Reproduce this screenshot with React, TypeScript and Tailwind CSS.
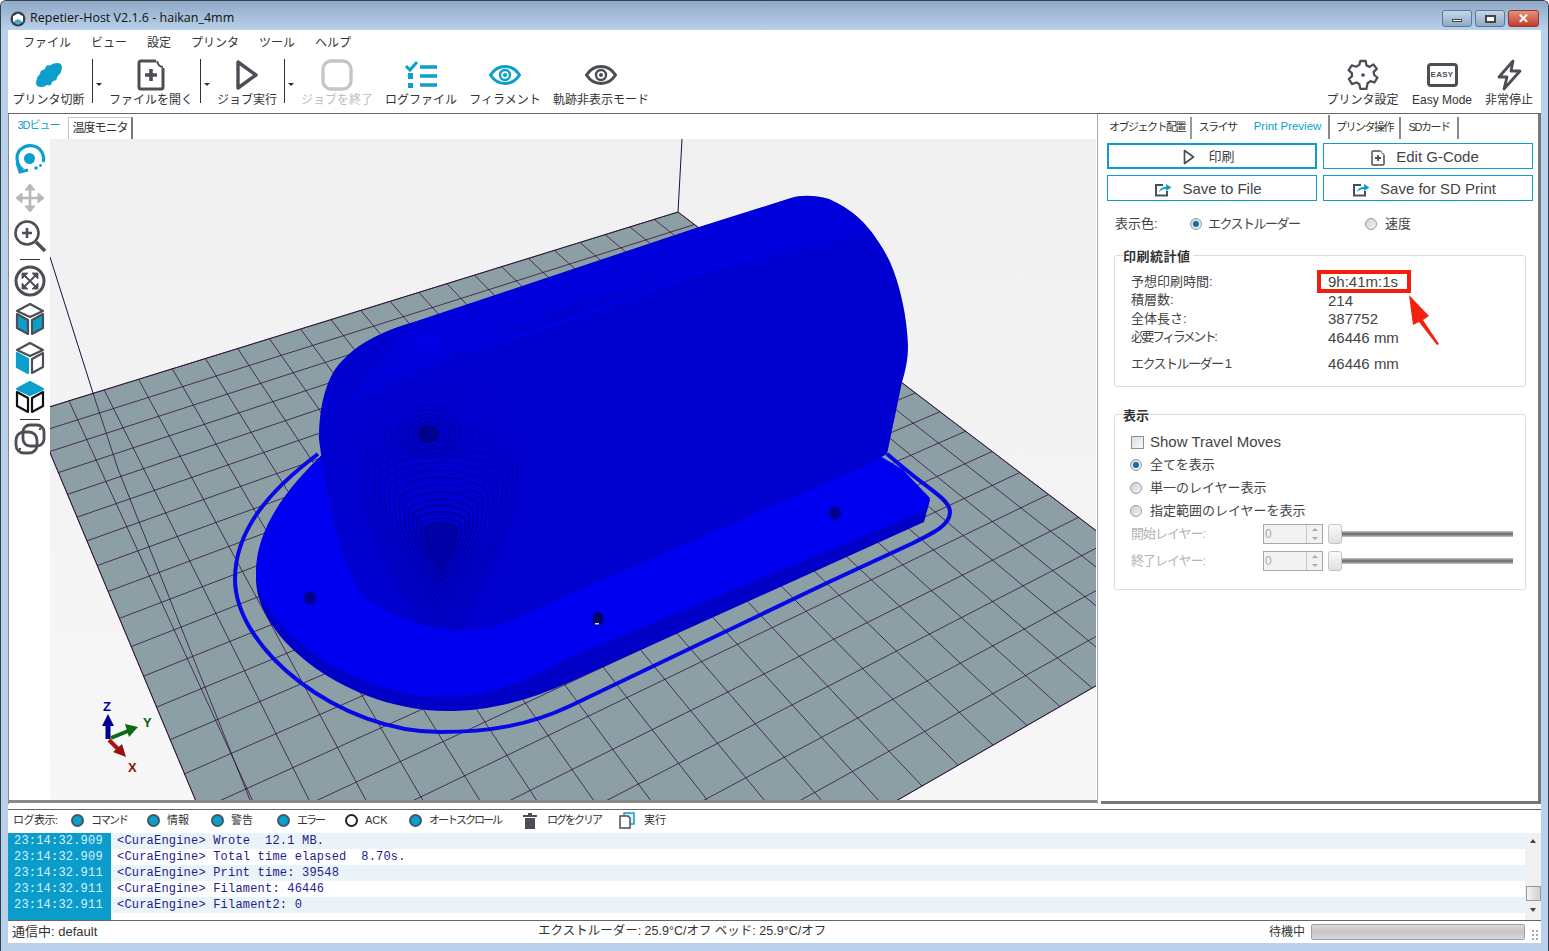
import React from 'react';

const TEAL = '#0c9fcd';
const DARK = '#4c4e56';

// bed corners in page pixels, grid is drawn through a homography
const corners = [[33, 412], [678, 212], [1212, 619], [332, 1126]];
const project = (u: number, v: number) => {
  const [[x0, y0], [x1, y1], [x2, y2], [x3, y3]] = corners;
  const dx1 = x1 - x2, dx2 = x3 - x2, sx = x0 - x1 + x2 - x3;
  const dy1 = y1 - y2, dy2 = y3 - y2, sy = y0 - y1 + y2 - y3;
  const den = dx1 * dy2 - dx2 * dy1;
  const g = (sx * dy2 - dx2 * sy) / den;
  const h = (dx1 * sy - sx * dy1) / den;
  const a = x1 - x0 + g * x1, b = x3 - x0 + h * x3;
  const d = y1 - y0 + g * y1, e = y3 - y0 + h * y3;
  const w = g * u + h * v + 1;
  return [(a * u + b * v + x0) / w, (d * u + e * v + y0) / w];
};
const DIV = 22;
const gridLines: number[][] = [];
for (let i = 0; i <= DIV; i++) {
  gridLines.push([...project(i / DIV, 0), ...project(i / DIV, 1)]);
  gridLines.push([...project(0, i / DIV), ...project(1, i / DIV)]);
}

const bodyPath =
  'M319 439 C319 410 325 375 345 358 C360 342 385 330 417 321 L570 270 L699 227 L791 198 C800 195 815 195 829 199 C845 206 855 214 863 222 C880 240 890 262 890 262 C900 285 907 316 908 346 C908 360 905 372 902 382 L887 454 L859 469 L570 594 C530 612 505 629 470 630 C430 630 395 620 370 600 C345 585 335 530 323 469 Z';
const shield = 'M-16 -18 C-8 -24 8 -24 16 -18 C18 -5 8 12 0 24 C-8 12 -18 -5 -16 -18 Z';

function Scene() {
  const rings = [1.25, 1.5, 1.75, 2, 2.3, 2.6, 2.9, 3.2, 3.5, 3.8, 4.1, 4.4, 4.7, 5];
  const upper = [10, 15, 20, 25, 30, 36, 42, 48, 55, 62, 70, 78];
  return (
    <svg width="1046" height="661" viewBox="50 139 1046 661" className="block">
      <defs>
        <linearGradient id="sky" x1="0" y1="0" x2="0" y2="1">
          <stop offset="0" stopColor="#f0f0f0" />
          <stop offset="1" stopColor="#f7f7f7" />
        </linearGradient>
        <pattern id="hatch" width="3" height="2" patternUnits="userSpaceOnUse" patternTransform="rotate(-18)">
          <rect width="3" height="1" fill="#0000c4" />
        </pattern>
        <clipPath id="bodyClip">
          <path d={bodyPath} />
        </clipPath>
      </defs>
      <rect x="50" y="139" width="1046" height="661" fill="url(#sky)" />
      <path d="M50 257 L93 393" stroke="#2c0a3c" fill="none" />
      <path d="M682 139 L678 212" stroke="#2c0a3c" fill="none" />
      <polygon points="33,412 678,212 1212,619 332,1126" fill="#8c9fa5" stroke="#22102e" strokeWidth="0.8" />
      {gridLines.map((l, i) => (
        <line key={i} x1={l[0]} y1={l[1]} x2={l[2]} y2={l[3]} stroke="#2c0a3c" strokeWidth="0.75" />
      ))}
      <path d="M93 393 L118 469 L250 800" stroke="#2c0a3c" strokeWidth="0.75" fill="none" />

      {/* skirt */}
      <path
        d="M318 454 C270 490 235 530 235 579 C235 650 340 732 440 732 C490 732 530 725 570 706 L829 582 L911 544 C935 532 950 525 950 512 C950 500 930 490 905 469 L887 454"
        fill="none"
        stroke="#0808e4"
        strokeWidth="4"
      />
      {/* base side and top */}
      <path d="M322 455 C285 490 256 530 256 579 C256 640 350 711 447 711 C490 711 530 700 570 682 L924 522 L930 500 L902 469 Z" fill="#0000c6" />
      <path d="M322 455 C285 490 256 530 256 572 C256 625 350 697 447 697 C490 697 530 680 570 657 L924 511 L930 498 L902 469 L880 456 Z" fill="#0000f0" />
      {/* holes */}
      <ellipse cx="310" cy="598" rx="6" ry="6.5" fill="#00008a" />
      <ellipse cx="598" cy="619" rx="5.5" ry="7" fill="#00006a" />
      <ellipse cx="835" cy="512" rx="6" ry="7" fill="#000090" transform="translate(0 1)" />
      <rect x="595" y="623" width="4" height="1.5" fill="#d8d8f0" />
      {/* body */}
      <path d={bodyPath} fill="#0000d6" />
      <g clipPath="url(#bodyClip)">
        <path d={bodyPath} fill="url(#hatch)" opacity="0.55" />
        <path d="M417 321 L791 198 L829 199 L870 232 L570 305 L350 400 Z" fill="#0000e0" opacity="0.7" />
        <path d="M467 352 L570 319 L842 222" stroke="#0000f2" strokeWidth="1.6" fill="none" />
        <ellipse cx="428" cy="342" rx="16" ry="8" fill="#0000e4" />
        {upper.map((r, i) => (
          <ellipse key={i} cx="429" cy="434" rx={r * 1.05} ry={r * 0.8} fill="none" stroke="#0000a0" strokeWidth={i < 5 ? 1.4 : 0.8} opacity={1 - i * 0.07} />
        ))}
        <ellipse cx="428" cy="434" rx="11" ry="9" fill="#000090" />
        {rings.map((k, i) => (
          <g key={i}>
            {i < 9 && (
              <path
                d={shield}
                transform={`translate(441 ${546 - i * 0.6}) scale(${k + 0.07})`}
                fill="none"
                stroke="#0000ea"
                strokeWidth="1"
                vectorEffect="non-scaling-stroke"
              />
            )}
            <path
              d={shield}
              transform={`translate(441 ${546 - i * 0.6}) scale(${k})`}
              fill="none"
              stroke="#000094"
              strokeWidth="1.6"
              vectorEffect="non-scaling-stroke"
              opacity={1 - i * 0.05}
            />
          </g>
        ))}
        <path d={shield} transform="translate(441 546)" fill="#0000a8" stroke="#000088" strokeWidth="1.5" />
      </g>

      {/* axes */}
      <path d="M108 739 L108 722" stroke="#000094" strokeWidth="5" />
      <polygon points="108,714 114,726 102,726" fill="#000094" />
      <path d="M111 738 L128 731" stroke="#0b6a12" strokeWidth="4" />
      <polygon points="138,727 125,724 129,737" fill="#0b6a12" />
      <path d="M109 740 L120 751" stroke="#b01212" strokeWidth="4" />
      <polygon points="126,757 113,752 122,744" fill="#951010" />
      <text x="103" y="711" fontSize="13" fontWeight="700" fill="#0000a0" fontFamily="Liberation Sans">Z</text>
      <text x="143" y="727" fontSize="13" fontWeight="700" fill="#0b5a12" fontFamily="Liberation Sans">Y</text>
      <text x="128" y="772" fontSize="13" fontWeight="700" fill="#8c1010" fontFamily="Liberation Sans">X</text>
    </svg>
  );
}

function Radio({ on = false, className = '' }: { on?: boolean; className?: string }) {
  return (
    <span className={`flex h-[12px] w-[12px] shrink-0 items-center justify-center rounded-full border border-[#9a9a9a] bg-gradient-to-br from-[#d0d0d0] to-[#f4f4f4] ${className}`}>
      {on && <span className="h-[6px] w-[6px] rounded-full bg-[#0d6fb0]" />}
    </span>
  );
}

function LogOption({ label, off = false, w, kana = true }: { label: string; off?: boolean; w: string; kana?: boolean }) {
  return (
    <span className={`flex items-center ${w}`}>
      <span className={`h-[13px] w-[13px] shrink-0 rounded-full border-2 ${off ? 'border-[#222] bg-white' : 'border-[#3c5a68] bg-[#0c9fcd]'}`} />
      <span className={`ml-[7px] whitespace-nowrap text-[11px] text-[#333] ${kana ? 'tracking-[-2px]' : 'tracking-[0px]'}`}>{label}</span>
    </span>
  );
}

function Tool({ w, label, className = '', muted = false, children }: { w: string; label: string; className?: string; muted?: boolean; children: React.ReactNode }) {
  return (
    <div className={`flex shrink-0 flex-col items-center ${w} ${className}`}>
      <div className="flex h-[36px] items-center justify-center">{children}</div>
      <span className={`whitespace-nowrap text-[12px] leading-[14px] ${muted ? 'text-[#bdbdbd]' : 'text-[#333]'}`}>{label}</span>
    </div>
  );
}

function Drop({ className = '' }: { className?: string }) {
  return (
    <div className={`flex h-[44px] shrink-0 items-start ${className}`}>
      <div className="mt-[2px] h-[44px] w-px bg-[#333]" />
      <div className="mt-[26px] ml-[3px] h-0 w-0 border-x-[3px] border-t-[3px] border-x-transparent border-t-[#333]" />
    </div>
  );
}

const PlayIcon = ({ s = 1 }: { s?: number }) => (
  <svg width={24 * s} height={32 * s} viewBox="0 0 24 32" fill="none" stroke={DARK} strokeWidth="3.4" strokeLinejoin="round">
    <path d="M3 3 L21 16 L3 29 Z" />
  </svg>
);

const FileIcon = ({ s = 1 }: { s?: number }) => (
  <svg width={28 * s} height={32 * s} viewBox="0 0 28 32" fill="none" stroke={DARK} strokeWidth="3" strokeLinejoin="round">
    <path d="M19 2 H4 A2 2 0 0 0 2 4 V28 A2 2 0 0 0 4 30 H24 A2 2 0 0 0 26 28 V9" />
    <path d="M20 2 C21 6 23 8 26 8" strokeWidth="2" />
    <path d="M14 10 V22 M8 16 H20" strokeWidth="3.6" />
  </svg>
);

const EyeIcon = ({ color }: { color: string }) => (
  <svg width="32" height="20" viewBox="0 0 32 20" fill="none" stroke={color}>
    <path d="M1.5 10 C6 3 11 1.5 16 1.5 C21 1.5 26 3 30.5 10 C26 17 21 18.5 16 18.5 C11 18.5 6 17 1.5 10 Z" strokeWidth="3" />
    <circle cx="16" cy="10" r="5" strokeWidth="2.4" />
    <circle cx="16" cy="10" r="2" fill={color} stroke="none" />
  </svg>
);

const ShareIcon = () => (
  <svg width="18" height="15" viewBox="0 0 18 15" fill="none">
    <path d="M9 3 H2 V13.5 H13 V9" stroke={DARK} strokeWidth="2" />
    <path d="M5 10 C6 6 9 5 12 5 V2 L17.5 5.5 L12 9 V7 C9 7 7 8 5 10 Z" fill={TEAL} />
  </svg>
);

const CubeIcon = ({ mode }: { mode: 'sides' | 'left' | 'top' }) => {
  const line = mode === 'top' ? '#111' : DARK;
  return (
    <svg width="30" height="34" viewBox="0 0 30 34" strokeWidth="2.2" strokeLinejoin="round" stroke={line}>
      <path d="M15 2 L28 9 L15 15 L2 9 Z" fill={mode === 'top' ? TEAL : 'white'} stroke={mode === 'top' ? TEAL : line} />
      <path d="M2 12 L13 18 V32 L2 26 Z" fill={mode === 'top' ? 'white' : TEAL} stroke={mode === 'top' ? line : mode === 'left' ? TEAL : line} />
      <path d="M28 12 L17 18 V32 L28 26 Z" fill={mode === 'sides' ? TEAL : 'white'} />
    </svg>
  );
};

const Stat = ({ label, value, className = '', labelClass = '' }: { label: string; value: string; className?: string; labelClass?: string }) => (
  <div className={`flex h-[18.5px] items-center ${className}`}>
    <span className={`w-[197px] -translate-y-px whitespace-nowrap text-[13px] text-[#444] ${labelClass}`}>{label}</span>
    <span className="text-[15px] text-[#444]">{value}</span>
  </div>
);

const ViewOption = ({ label, on = false }: { label: string; on?: boolean }) => (
  <div className="flex h-[23px] items-center">
    <Radio on={on} className="ml-[15px]" />
    <span className="ml-[8px] whitespace-nowrap text-[13px] text-[#444]">{label}</span>
  </div>
);

const LayerRow = ({ label, className = '' }: { label: string; className?: string }) => (
  <div className={`flex h-[20px] items-center ${className}`}>
    <span className="ml-[16px] w-[132px] whitespace-nowrap text-[13px] tracking-[-1px] text-[#b4b4b4]">{label}</span>
    <div className="flex h-[20px] w-[60px] items-center justify-between border border-[#a8a8a8] bg-[#f2f2f2] pl-[1px] text-[12px] text-[#aaa]">
      <span>0</span>
      <span className="flex h-full w-[16px] flex-col items-center justify-around border-l border-[#c8c8c8]">
        <span className="h-0 w-0 border-x-[3px] border-b-[3px] border-x-transparent border-b-[#aaa]" />
        <span className="h-0 w-0 border-x-[3px] border-t-[3px] border-x-transparent border-t-[#aaa]" />
      </span>
    </div>
    <div className="relative ml-[5px] h-[20px] w-[185px]">
      <div className="absolute top-[7px] left-[10px] right-0 h-[6px] bg-gradient-to-b from-[#c8c8c8] via-[#666] to-[#c8c8c8]" />
      <div className="absolute top-0 left-0 h-[20px] w-[14px] rounded-[3px] border border-[#c4c4c4] bg-gradient-to-b from-[#fafafa] to-[#e0e0e0]" />
    </div>
  </div>
);

const logRows = [
  ['23:14:32.909', '<CuraEngine> Wrote  12.1 MB.'],
  ['23:14:32.909', '<CuraEngine> Total time elapsed  8.70s.'],
  ['23:14:32.911', '<CuraEngine> Print time: 39548'],
  ['23:14:32.911', '<CuraEngine> Filament: 46446'],
  ['23:14:32.911', '<CuraEngine> Filament2: 0'],
];

export default function App() {
  return (
    <div className="flex h-[951px] w-[1549px] flex-col overflow-hidden rounded-t-[6px] border border-b-0 border-[#33404c] bg-[#b9d1ea] font-['Liberation_Sans','Noto_Sans_CJK_JP',sans-serif] text-[#333]">
      {/* title bar */}
      <div className="flex h-[29px] shrink-0 items-center bg-gradient-to-b from-[#8fa9c6] to-[#b9d1ea] pt-[6px] pl-[9px]">
        <svg width="16" height="16" viewBox="0 0 16 16">
          <circle cx="8" cy="8" r="7.5" fill="#3a4048" />
          <path d="M8 2.5 L13 5.3 V10.7 L8 13.5 L3 10.7 V5.3 Z" fill="#fff" />
          <path d="M8 8 L13 10.7 L8 13.5 L3 10.7 Z" fill="#4aa7cf" />
        </svg>
        <span className="ml-[4px] font-['Open_Sans',sans-serif] text-[12.5px] text-[#111]">Repetier-Host V2.1.6 - haikan_4mm</span>
        <div className="ml-auto mr-[9px] flex gap-[3px]">
          <div className="flex h-[17px] w-[30px] items-end justify-center rounded-[3px] border border-[#5f7893] bg-gradient-to-b from-[#c5d6e8] to-[#8ea9c6] pb-[4px]">
            <div className="h-[3px] w-[10px] border border-[#444] bg-white" />
          </div>
          <div className="flex h-[17px] w-[30px] items-center justify-center rounded-[3px] border border-[#5f7893] bg-gradient-to-b from-[#c5d6e8] to-[#8ea9c6]">
            <div className="h-[8px] w-[11px] border-2 border-[#444] bg-white" />
          </div>
          <div className="flex h-[17px] w-[31px] items-center justify-center rounded-[3px] border border-[#8c3a32] bg-gradient-to-b from-[#e2917f] to-[#c4382a] text-[13px] leading-none font-bold text-white">
            ✕
          </div>
        </div>
      </div>

      {/* client area */}
      <div className="mx-[7px] flex h-[913px] shrink-0 flex-col bg-white">
        {/* menu */}
        <div className="flex h-[25px] shrink-0 items-center gap-[20px] pl-[15px] text-[12px] text-[#333]">
          <span>ファイル</span>
          <span>ビュー</span>
          <span>設定</span>
          <span>プリンタ</span>
          <span>ツール</span>
          <span>ヘルプ</span>
        </div>

        {/* toolbar */}
        <div className="flex h-[59px] shrink-0 items-start border-b border-[#666] pl-[4px] pt-[2px]">
          <Tool w="w-[73px]" label="プリンタ切断">
            <svg width="32" height="30" viewBox="0 0 32 30">
              <g fill={TEAL} transform="rotate(-42 16 15)">
                <ellipse cx="16" cy="15" rx="16" ry="7.5" />
                <circle cx="7" cy="11" r="2.5" />
                <circle cx="13" cy="9" r="2.5" />
                <circle cx="20" cy="9" r="2.5" />
                <circle cx="11" cy="21" r="2.5" />
                <circle cx="18" cy="21" r="2.5" />
                <circle cx="25" cy="19" r="2.5" />
              </g>
            </svg>
          </Tool>
          <Drop className="ml-[7px]" />
          <Tool w="w-[82px]" label="ファイルを開く" className="ml-[8px]">
            <FileIcon />
          </Tool>
          <Drop className="ml-[8px]" />
          <Tool w="w-[60px]" label="ジョブ実行" className="ml-[7px]">
            <PlayIcon />
          </Tool>
          <Drop className="ml-[7px]" />
          <Tool w="w-[72px]" label="ジョブを終了" className="ml-[7px]" muted>
            <svg width="32" height="32" viewBox="0 0 32 32" fill="none" stroke="#c6c6c6" strokeWidth="3.4">
              <rect x="2" y="2" width="28" height="28" rx="8" />
            </svg>
          </Tool>
          <Tool w="w-[72px]" label="ログファイル" className="ml-[12px]">
            <svg width="34" height="30" viewBox="0 0 34 30" fill="none" stroke={TEAL}>
              <path d="M2 6 L6 10 L13 2" strokeWidth="3" />
              <path d="M16 7 H33 M16 16 H33 M16 25 H33" strokeWidth="3.6" />
              <path d="M4 13 H9 V19 H4 Z M4 23 H9 V28 H4 Z" fill={TEAL} strokeWidth="0" />
            </svg>
          </Tool>
          <Tool w="w-[72px]" label="フィラメント" className="ml-[12px]">
            <EyeIcon color={TEAL} />
          </Tool>
          <Tool w="w-[96px]" label="軌跡非表示モード" className="ml-[12px]">
            <EyeIcon color={DARK} />
          </Tool>
          <Tool w="w-[73px]" label="プリンタ設定" className="ml-auto">
            <svg width="32" height="32" viewBox="0 0 24 24" fill="none" stroke={DARK} strokeWidth="1.7" strokeLinejoin="round">
              <path d="M10 1.5 H14 L14.6 4.8 L17 5.9 L19.8 4 L22.4 7.4 L20 9.6 L20.4 12 L22.8 14 L20.6 17.6 L17.6 16.6 L15.4 18.2 L14.6 22.4 H10 L9.2 18.8 L7 17.6 L3.8 18.8 L1.4 15 L3.8 12.8 L3.6 10.6 L1.2 8.4 L3.6 4.8 L6.8 5.8 L9.2 4.4 Z" />
              <circle cx="12" cy="12" r="1.4" fill={DARK} stroke="none" />
            </svg>
          </Tool>
          <Tool w="w-[62px]" label="Easy Mode" className="ml-[12px]">
            <div className="flex h-[24px] w-[31px] items-center justify-center rounded-[4px] border-[3px] border-[#4c4e56] text-[8px] font-bold tracking-[0.3px] text-[#4c4e56]">
              EASY
            </div>
          </Tool>
          <Tool w="w-[48px]" label="非常停止" className="ml-[12px] mr-[8px]">
            <svg width="26" height="32" viewBox="0 0 26 32" fill="none" stroke={DARK} strokeWidth="2.8" strokeLinejoin="round">
              <path d="M17 2 L3 18 H11 L8 30 L24 12 H15 Z" />
            </svg>
          </Tool>
        </div>

        {/* main panes */}
        <div className="flex h-[690px] shrink-0">
          <div className="flex w-[1089px] shrink-0 flex-col border-l border-[#888]">
            <div className="flex h-[25px] shrink-0 items-end">
              <div className="flex h-[25px] w-[59px] items-start justify-center pt-[3px] text-[11px] tracking-[-1px] text-[#0c9fcd]">3Dビュー</div>
              <div className="flex h-[22px] w-[65px] items-center justify-center border-t border-l border-[#c4c4c4] border-r-2 border-r-[#777] pb-[2px] text-[12px] tracking-[-1px] text-[#333]">温度モニタ</div>
            </div>
            <div className="flex h-[661px] shrink-0">
              <div className="flex w-[41px] shrink-0 flex-col items-center bg-white pt-[4px]">
                <svg width="32" height="32" viewBox="0 0 32 32" fill="none">
                  <path d="M9 27 C2 22 1 11 7 6 C14 0 26 2 29 12 C30 15 30 17 29 19" stroke={TEAL} strokeWidth="3.2" />
                  <path d="M3 20 L6 29 L14 27" stroke={TEAL} strokeWidth="3" />
                  <circle cx="15.5" cy="15.5" r="5.5" fill={TEAL} />
                  <circle cx="22" cy="25" r="1.8" fill={TEAL} />
                  <circle cx="26.5" cy="22.5" r="1.4" fill={TEAL} />
                </svg>
                <svg width="32" height="32" viewBox="0 0 32 32" className="mt-[7px]" fill="none" stroke="#b8b8b8" strokeWidth="2.6">
                  <path d="M16 3 V29 M3 16 H29" />
                  <path d="M11 8 L16 2 L21 8 Z M11 24 L16 30 L21 24 Z M8 11 L2 16 L8 21 Z M24 11 L30 16 L24 21 Z" fill="#b8b8b8" strokeWidth="1" />
                </svg>
                <svg width="34" height="34" viewBox="0 0 34 34" className="mt-[5px]" fill="none" stroke={DARK}>
                  <circle cx="14" cy="14" r="11.5" strokeWidth="2.6" />
                  <path d="M14 9 V19 M9 14 H19" strokeWidth="2.6" />
                  <path d="M23 23 L32 32" strokeWidth="3.6" />
                </svg>
                <div className="mt-[6px] h-px w-[20px] bg-[#333]" />
                <svg width="32" height="32" viewBox="0 0 32 32" className="mt-[5px]" fill="none" stroke={DARK}>
                  <circle cx="16" cy="16" r="14" strokeWidth="3" />
                  <path d="M9 9 L23 23 M23 9 L9 23" strokeWidth="1.8" />
                  <path d="M8 14 V8 H14 Z M24 14 V8 H18 Z M8 18 V24 H14 Z M24 18 V24 H18 Z" fill={DARK} strokeWidth="0.8" />
                </svg>
                <div className="mt-[5px]"><CubeIcon mode="sides" /></div>
                <div className="mt-[5px]"><CubeIcon mode="left" /></div>
                <div className="mt-[5px]"><CubeIcon mode="top" /></div>
                <div className="mt-[5px] h-px w-[20px] bg-[#333]" />
                <svg width="32" height="32" viewBox="0 0 32 32" className="mt-[3px]" fill="none" stroke={DARK} strokeWidth="2.8">
                  <rect x="9" y="2" width="21" height="21" rx="7" />
                  <rect x="2" y="9" width="21" height="21" rx="8" />
                  <circle cx="26" cy="6" r="1.2" fill={DARK} strokeWidth="0" />
                  <circle cx="6" cy="26" r="1.2" fill={DARK} strokeWidth="0" />
                </svg>
              </div>
              <Scene />
            </div>
            <div className="h-[3px] shrink-0 bg-[#8a8a8a]" />
          </div>
          <div className="w-[4px] shrink-0 border-l border-[#aaa]" />

          {/* right pane */}
          <div className="flex w-[440px] shrink-0 flex-col border-r-[3px] border-b-[3px] border-[#777]">
            <div className="flex h-[25px] shrink-0 items-end pl-[3px] text-[11px] tracking-[-1.5px] text-[#333]">
              <div className="flex h-[22px] w-[88px] items-center justify-center border-r-2 border-[#999] pb-[2px]">オブジェクト配置</div>
              <div className="flex h-[22px] w-[51px] items-center justify-center pb-[2px]">スライサ</div>
              <div className="flex h-[24px] w-[87px] items-start justify-center border-r-2 border-[#888] pt-[3px] pl-[4px] text-[11.5px] tracking-[0px] text-[#0c9fcd]">Print Preview</div>
              <div className="flex h-[22px] w-[71px] items-center justify-center border-r-2 border-[#888] pb-[2px]">プリンタ操作</div>
              <div className="flex h-[22px] w-[58px] items-center justify-center border-r-2 border-[#888] pb-[2px]">SDカード</div>
            </div>
            <div className="grid grid-cols-2 gap-x-[6px] gap-y-[6px] pt-[4px] pl-[6px] pr-[5px] text-[15px] text-[#444]">
              <button className="flex h-[26px] items-center justify-center gap-[13px] border-[2px] border-[#0c9fcd] pt-[2px] pr-[6px]">
                <PlayIcon s={0.5} />
                <span className="text-[13px]">印刷</span>
              </button>
              <button className="flex h-[26px] items-center justify-center gap-[11px] border border-[#0c9fcd] pt-[3px] pr-[6px]">
                <FileIcon s={0.5} />
                <span>Edit G-Code</span>
              </button>
              <button className="flex h-[26px] items-center justify-center gap-[10px] border border-[#0c9fcd] pt-[3px] pr-[8px]">
                <ShareIcon />
                <span>Save to File</span>
              </button>
              <button className="flex h-[26px] items-center justify-center gap-[10px] border border-[#0c9fcd] pt-[3px] pr-[8px]">
                <ShareIcon />
                <span>Save for SD Print</span>
              </button>
            </div>

            <div className="mt-[12px] flex h-[22px] items-center pl-[14px] text-[13px] text-[#444]">
              <span className="w-[75px]">表示色:</span>
              <Radio on />
              <span className="ml-[6px] w-[157px] tracking-[-1.5px]">エクストルーダー</span>
              <Radio />
              <span className="ml-[8px]">速度</span>
            </div>

            {/* stats box */}
            <div className="relative mt-[20px] ml-[13px] h-[132px] w-[412px] rounded-[3px] border border-[#dcdcdc]">
              <span className="absolute top-[-7px] left-[8px] bg-white pr-[2px] text-[13px] leading-[16px] font-bold tracking-[0.5px] text-[#333]">印刷統計値</span>
              <div className="pt-[17px] pl-[16px]">
                <Stat label="予想印刷時間:" value="9h:41m:1s" />
                <Stat label="積層数:" value="214" />
                <Stat label="全体長さ:" value="387752" />
                <Stat label="必要フィラメント:" value="46446 mm" labelClass="tracking-[-2.5px]" />
                <Stat label="エクストルーダー 1" value="46446 mm" className="mt-[8px]" labelClass="tracking-[-1.5px]" />
              </div>
              <div className="absolute top-[14px] left-[202px] h-[23px] w-[94px] border-[4px] border-[#f21d0c]" />
              <svg width="40" height="60" viewBox="0 0 40 60" className="absolute top-[36px] left-[286px]">
                <path d="M8 3 L28 24 L22 28 L38 52 L36 53 L18 30 L12 33 Z" fill="#f4200e" />
              </svg>
            </div>

            {/* view box */}
            <div className="relative mt-[27px] ml-[13px] h-[176px] w-[412px] rounded-[3px] border border-[#dcdcdc]">
              <span className="absolute top-[-7px] left-[8px] bg-white pr-[2px] text-[13px] leading-[16px] font-bold text-[#333]">表示</span>
              <div className="pt-[16px]">
                <div className="flex h-[22px] items-center">
                  <span className="ml-[16px] h-[13px] w-[13px] border border-[#8e8e8e] bg-gradient-to-br from-[#dedede] to-[#f8f8f8]" />
                  <span className="ml-[6px] text-[15px] text-[#444]">Show Travel Moves</span>
                </div>
                <ViewOption label="全てを表示" on />
                <ViewOption label="単一のレイヤー表示" />
                <ViewOption label="指定範囲のレイヤーを表示" />
                <LayerRow label="開始レイヤー:" className="mt-[2px]" />
                <LayerRow label="終了レイヤー:" className="mt-[7px]" />
              </div>
            </div>
          </div>
        </div>

        <div className="h-[5px] shrink-0" />

        {/* log */}
        <div className="flex h-[112px] shrink-0 flex-col border-y border-[#666]">
          <div className="flex h-[23px] shrink-0 items-center pb-[2px] pl-[5px]">
            <span className="w-[58px] whitespace-nowrap text-[11px] tracking-[-0.5px] text-[#333]">ログ表示:</span>
            <LogOption label="コマンド" w="w-[76px]" />
            <LogOption label="情報" kana={false} w="w-[64px]" />
            <LogOption label="警告" kana={false} w="w-[66px]" />
            <LogOption label="エラー" w="w-[68px]" />
            <LogOption label="ACK" off kana={false} w="w-[64px]" />
            <LogOption label="オートスクロール" w="w-[114px]" />
            <svg width="14" height="16" viewBox="0 0 14 16" fill={DARK}>
              <rect x="0" y="2" width="14" height="2" />
              <rect x="5" y="0" width="4" height="2" />
              <rect x="2" y="5" width="10" height="11" />
            </svg>
            <span className="ml-[10px] w-[72px] whitespace-nowrap text-[11px] tracking-[-2px]">ログをクリア</span>
            <svg width="16" height="17" viewBox="0 0 16 17" fill="white" stroke={DARK} strokeWidth="1.5">
              <path d="M5 1 H15 V12 H5 Z" fill="#dff1f8" stroke={TEAL} />
              <path d="M1 4 H9 L11 6 V16 H1 Z" />
            </svg>
            <span className="ml-[9px] text-[11px]">実行</span>
          </div>
          <div className="flex h-[87px] shrink-0">
            <div className="w-[103px] shrink-0 bg-[#0a9ccb]">
              {logRows.map((r, i) => (
                <div key={i} className="h-[16px] pl-[6px] font-['Liberation_Mono',monospace] text-[12px] leading-[16px] tracking-[0.2px] text-[#d8f1f9]">
                  {r[0]}
                </div>
              ))}
            </div>
            <div className="flex-1">
              {logRows.map((r, i) => (
                <div key={i} className={`h-[16px] whitespace-pre pl-[6px] font-['Liberation_Mono',monospace] text-[12px] leading-[16px] tracking-[0.2px] text-[#1c1c8e] ${i % 2 === 0 ? 'bg-[#eaf3f7]' : 'bg-white'}`}>
                  {r[1]}
                </div>
              ))}
            </div>
            <div className="flex w-[16px] shrink-0 flex-col items-center bg-[#f0f0f0]">
              <div className="mt-[6px] h-0 w-0 border-x-[3px] border-b-[4px] border-x-transparent border-b-[#444]" />
              <div className="mt-[43px] h-[15px] w-[15px] border border-[#999] bg-gradient-to-r from-[#f4f4f4] to-[#cfcfcf]" />
              <div className="mt-[7px] h-0 w-0 border-x-[3px] border-t-[4px] border-x-transparent border-t-[#444]" />
            </div>
          </div>
        </div>

        {/* status bar */}
        <div className="flex h-[23px] shrink-0 items-center pb-[2px] pl-[4px] text-[13px] text-[#333]">
          <span className="w-[526px]">通信中: default</span>
          <span className="w-[731px] text-[12.5px]">エクストルーダー: 25.9°C/オフ ベッド: 25.9°C/オフ</span>
          <span className="text-[12px]">待機中</span>
          <div className="ml-[6px] h-[16px] w-[214px] rounded-[2px] border border-[#a0a0a0] bg-gradient-to-b from-[#dcdcdc] via-[#c4c4c4] to-[#d8d8d8]" />
          <div className="ml-[6px] mt-[6px] h-[12px] w-[9px] bg-[radial-gradient(#aaa_1px,transparent_1px)] bg-[length:4px_4px]" />
        </div>
      </div>
    </div>
  );
}
